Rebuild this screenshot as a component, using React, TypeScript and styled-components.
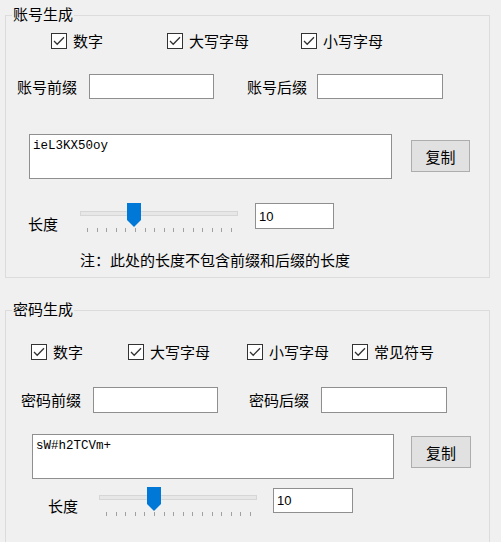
import React from "react";
import styled, { createGlobalStyle } from "styled-components";

const Global = createGlobalStyle`
  html, body { margin: 0; padding: 0; background: #f0f0f0; }
  body { font-family: "Noto Sans CJK SC", "Noto Sans", sans-serif; color: #000; }
  * { box-sizing: border-box; }
`;

const Page = styled.div`
  width: 501px;
  height: 542px;
  overflow: hidden;
  padding: 15px 0 0 5px;
  display: flex;
  flex-direction: column;
`;

const Group = styled.section<{ $h: number; $mt?: number }>`
  position: relative;
  width: 485px;
  height: ${(p) => p.$h}px;
  margin-top: ${(p) => p.$mt ?? 0}px;
  border: 1px solid #dcdcdc;
  display: flex;
  flex-direction: column;
  flex-shrink: 0;
`;

const GroupTitle = styled.span`
  position: absolute;
  top: -11px;
  left: 6px;
  padding: 0 1px;
  background: #f0f0f0;
  font-size: 15px;
  line-height: 18px;
`;

const Row = styled.div<{ $mt: number; $pl: number; $align?: string }>`
  display: flex;
  align-items: ${(p) => p.$align ?? "center"};
  margin-top: ${(p) => p.$mt}px;
  padding-left: ${(p) => p.$pl}px;
`;

const CheckItem = styled.label<{ $w?: number }>`
  display: flex;
  align-items: center;
  gap: 6px;
  height: 16px;
  width: ${(p) => (p.$w ? `${p.$w}px` : "auto")};
  font-size: 15px;
  line-height: 16px;
`;

const Box = styled.span`
  width: 16px;
  height: 16px;
  border: 1px solid #333;
  background: #fff;
  display: flex;
  align-items: center;
  justify-content: center;
  flex-shrink: 0;
`;

const Label = styled.span<{ $ml?: number; $mt?: number }>`
  font-size: 15px;
  line-height: 20px;
  white-space: nowrap;
  margin-left: ${(p) => p.$ml ?? 0}px;
  margin-top: ${(p) => p.$mt ?? 0}px;
`;

const TextInput = styled.input<{ $w: number; $h: number; $ml: number }>`
  width: ${(p) => p.$w}px;
  height: ${(p) => p.$h}px;
  margin: 0 0 0 ${(p) => p.$ml}px;
  border: 1px solid #8f8f8f;
  background: #fff;
  padding: 0 3px;
  font-family: "Liberation Sans", sans-serif;
  font-size: 13px;
  color: #000;
  outline: none;
`;

const Output = styled.textarea<{ $w: number }>`
  width: ${(p) => p.$w}px;
  height: 45px;
  margin: 0;
  border: 1px solid #8f8f8f;
  background: #fff;
  padding: 4px 3px;
  font-family: "Liberation Mono", monospace;
  font-size: 12.5px;
  line-height: 15px;
  color: #000;
  resize: none;
  overflow: hidden;
  outline: none;
`;

const Button = styled.button<{ $w: number; $ml: number; $mt: number }>`
  width: ${(p) => p.$w}px;
  height: 32px;
  margin: ${(p) => p.$mt}px 0 0 ${(p) => p.$ml}px;
  background: #e1e1e1;
  border: 1px solid #adadad;
  font-family: "Noto Sans CJK SC", sans-serif;
  font-size: 15px;
  color: #000;
  padding: 0;
`;

const SliderBox = styled.div<{ $ml: number }>`
  position: relative;
  width: 158px;
  height: 31px;
  margin-left: ${(p) => p.$ml}px;
  flex-shrink: 0;
`;

const Track = styled.div`
  margin-top: 8px;
  height: 5px;
  border: 1px solid #d6d6d6;
  background: #e7e7e7;
`;

const Ticks = styled.div`
  display: flex;
  justify-content: space-between;
  margin-top: 12px;
  padding: 0 6px 0 7px;
`;

const Tick = styled.span`
  width: 1px;
  height: 4px;
  background: #a0a0a0;
`;

const Thumb = styled.svg`
  position: absolute;
  top: 0;
  display: block;
`;

const NumInput = styled(TextInput)<{ $mt?: number }>`
  margin-top: ${(p) => p.$mt ?? 0}px;
`;

const Check = ({ w, text }: { w?: number; text: string }) => (
  <CheckItem $w={w}>
    <Box>
      <svg width="12" height="10" viewBox="0 0 12 10">
        <polyline points="1,5 4.2,8.2 11,1.2" fill="none" stroke="#333" strokeWidth="1.3" />
      </svg>
    </Box>
    {text}
  </CheckItem>
);

const Slider = ({ ml, pos }: { ml: number; pos: number }) => (
  <SliderBox $ml={ml}>
    <Thumb width="14" height="24" viewBox="0 0 14 24" style={{ left: pos }}>
      <path d="M0 0 H14 V17 L7 24 L0 17 Z" fill="#0078d7" />
    </Thumb>
    <Track />
    <Ticks>
      {Array.from({ length: 16 }).map((_, i) => (
        <Tick key={i} />
      ))}
    </Ticks>
  </SliderBox>
);

export default function App() {
  return (
    <>
      <Global />
      <Page>
        <Group $h={263}>
          <GroupTitle>账号生成</GroupTitle>
          <Row $mt={17} $pl={45}>
            <Check w={116} text="数字" />
            <Check w={134} text="大写字母" />
            <Check text="小写字母" />
          </Row>
          <Row $mt={25} $pl={11}>
            <Label>账号前缀</Label>
            <TextInput $w={125} $h={25} $ml={12} defaultValue="" />
            <Label $ml={33}>账号后缀</Label>
            <TextInput $w={126} $h={25} $ml={10} defaultValue="" />
          </Row>
          <Row $mt={35} $pl={23} $align="flex-start">
            <Output $w={363} readOnly value="ieL3KX50oy" />
            <Button $w={59} $ml={19} $mt={6}>复制</Button>
          </Row>
          <Row $mt={24} $pl={22} $align="flex-start">
            <Label $mt={11}>长度</Label>
            <Slider ml={22} pos={47} />
            <NumInput $w={79} $h={26} $ml={17} readOnly value="10" />
          </Row>
          <Row $mt={16} $pl={74}>
            <Label>注：此处的长度不包含前缀和后缀的长度</Label>
          </Row>
        </Group>

        <Group $h={250} $mt={32}>
          <GroupTitle>密码生成</GroupTitle>
          <Row $mt={33} $pl={25}>
            <Check w={97} text="数字" />
            <Check w={119} text="大写字母" />
            <Check w={105} text="小写字母" />
            <Check text="常见符号" />
          </Row>
          <Row $mt={27} $pl={15}>
            <Label>密码前缀</Label>
            <TextInput $w={125} $h={26} $ml={12} defaultValue="" />
            <Label $ml={31}>密码后缀</Label>
            <TextInput $w={126} $h={26} $ml={12} defaultValue="" />
          </Row>
          <Row $mt={21} $pl={26} $align="flex-start">
            <Output $w={362} readOnly value="sW#h2TCVm+" />
            <Button $w={60} $ml={17} $mt={2}>复制</Button>
          </Row>
          <Row $mt={8} $pl={42} $align="flex-start">
            <Label $mt={9}>长度</Label>
            <Slider ml={21} pos={48} />
            <NumInput $w={80} $h={25} $ml={16} $mt={1} readOnly value="10" />
          </Row>
        </Group>
      </Page>
    </>
  );
}
